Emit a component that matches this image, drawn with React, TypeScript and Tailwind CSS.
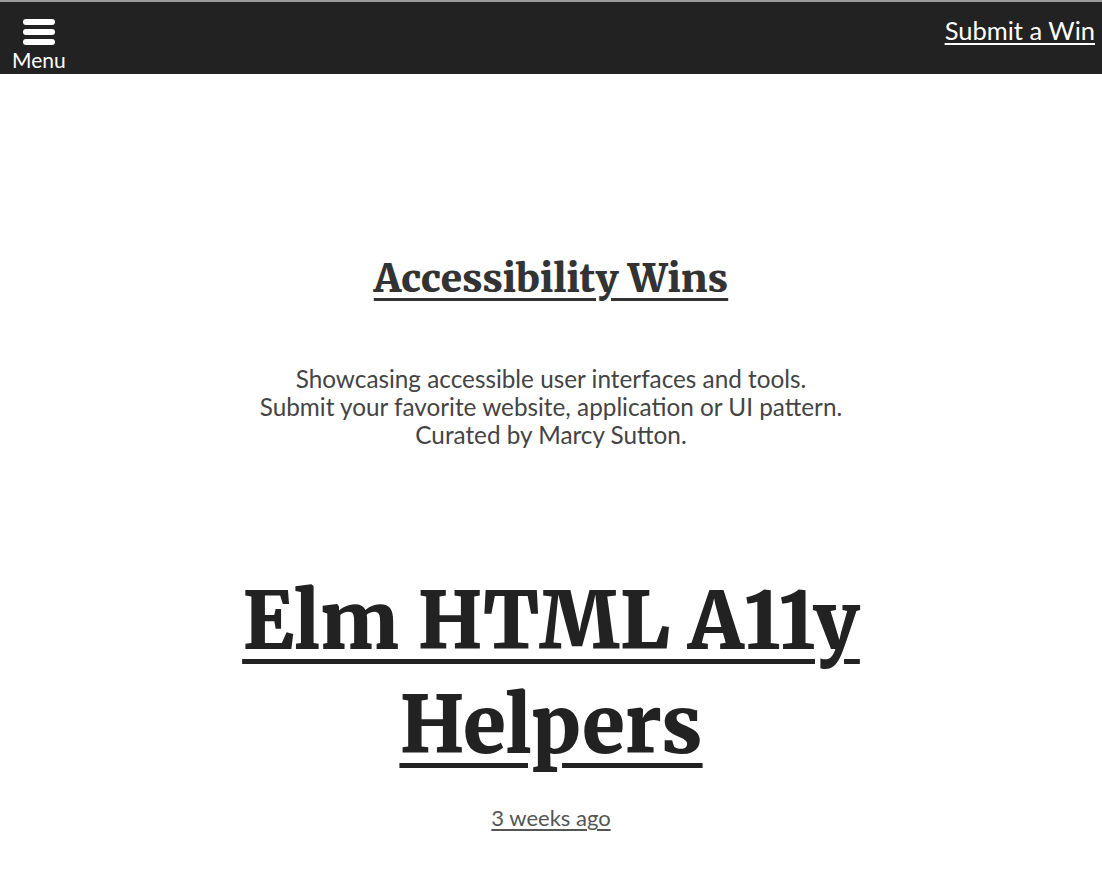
import { useState } from "react";

const SERIF = "font-['Merriweather','DejaVu_Serif',serif]";
const SANS = "font-['Lato','Liberation_Sans',sans-serif]";

function MenuButton() {
  const [open, setOpen] = useState(false);
  return (
    <button
      type="button"
      onClick={() => setOpen(!open)}
      aria-expanded={open}
      className={`flex flex-col items-center pl-3 pt-[17px] text-white ${SANS}`}
    >
      <svg width="32" height="26" viewBox="0 0 32 26" aria-hidden="true">
        <rect x="0" y="0" width="32" height="6" rx="3" fill="#fff" />
        <rect x="0" y="10" width="32" height="6" rx="3" fill="#fff" />
        <rect x="0" y="20" width="32" height="6" rx="3" fill="#fff" />
      </svg>
      <span className="text-[21px] leading-[22px] mt-[4px]">Menu</span>
    </button>
  );
}

export default function App() {
  return (
    <div className={`min-h-[880px] bg-white ${SANS}`}>
      <header className="flex justify-between items-start h-[74px] bg-[#222] border-t-2 border-[#9a9a9a]">
        <MenuButton />
        <a href="#submit" className="text-white text-[25.5px] underline underline-offset-[3px] decoration-2 pr-[7px] pt-[13px] leading-[30px]">
          Submit a Win
        </a>
      </header>

      <main className="flex flex-col items-center text-center">
        <h1 className={`mt-[182px] text-[38.7px] leading-[46px] font-black text-[#333] ${SERIF}`}>
          <a href="#home" className="underline underline-offset-[6px] decoration-[3px]">Accessibility Wins</a>
        </h1>

        <p className="mt-[63px] text-[24.3px] leading-[28px] text-[#444]">
          Showcasing accessible user interfaces and tools.
          <br />
          Submit your favorite website, application or UI pattern.
          <br />
          Curated by Marcy Sutton.
        </p>

        <article className="mt-[120px] flex flex-col items-center">
          <h2 className={`w-[720px] text-[78px] leading-[104px] font-black text-[#222] ${SERIF}`}>
            <a href="#elm-html-a11y" className="underline underline-offset-[10px] decoration-[5px]">
              Elm HTML A11y Helpers
            </a>
          </h2>
          <a href="#elm-html-a11y" className="mt-[27px] text-[22px] leading-[28px] text-[#555] underline underline-offset-[3px]">
            3 weeks ago
          </a>
        </article>
      </main>
    </div>
  );
}
